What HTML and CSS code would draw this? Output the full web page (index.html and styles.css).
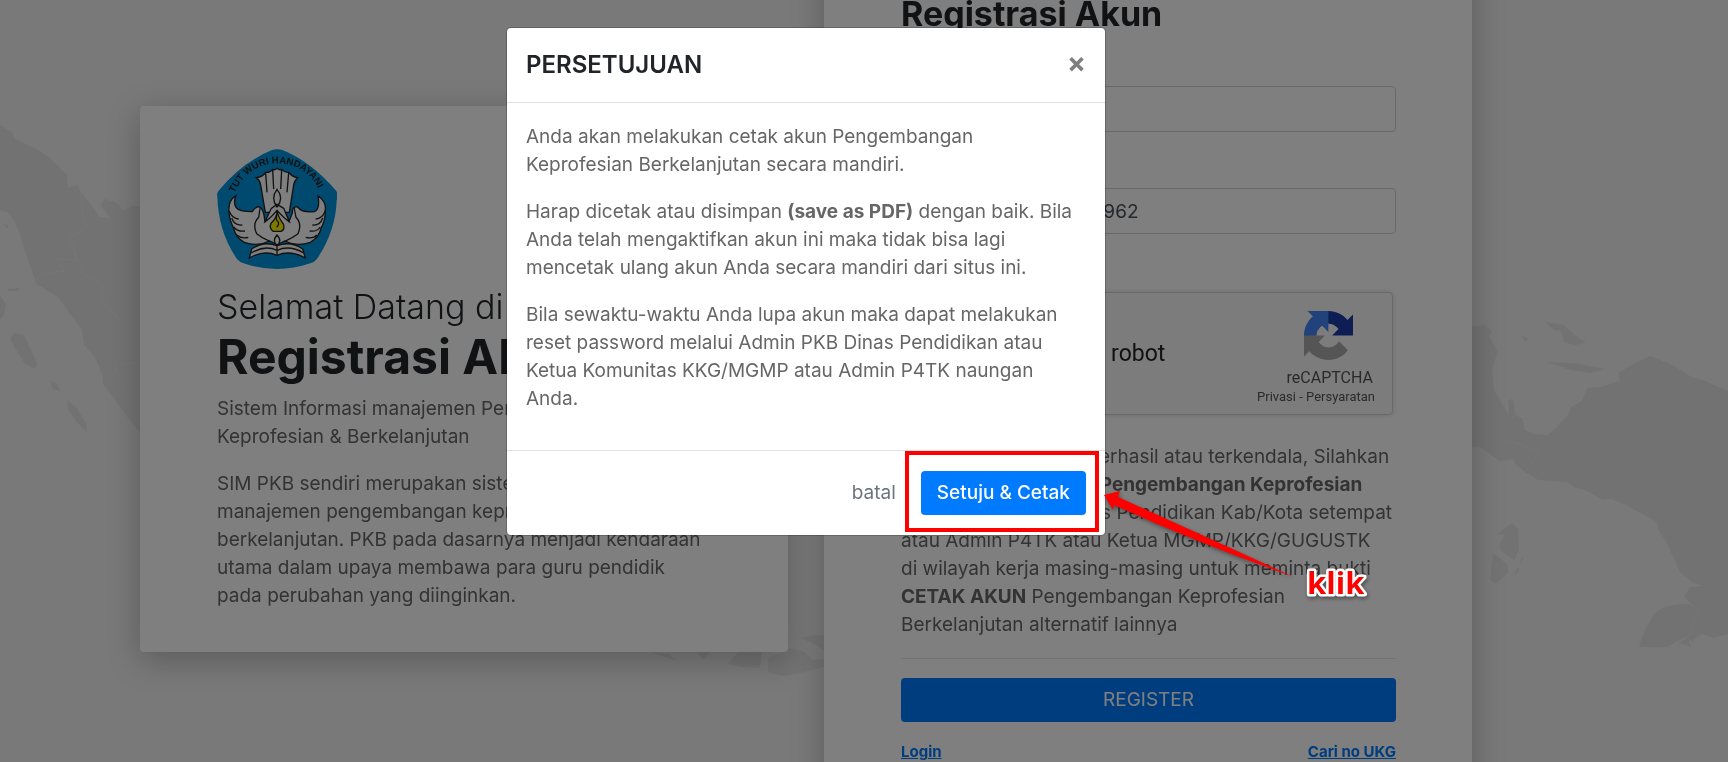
FILE: index.html
```html
<!DOCTYPE html>
<html lang="id">
<head>
  <meta charset="UTF-8">
  <meta name="viewport" content="width=device-width, initial-scale=1">
  <title>Registrasi Akun</title>
  <link rel="stylesheet" href="styles.css">
</head>
<body>

  <!-- Background map -->
  <svg class="map" viewBox="0 0 1728 762" preserveAspectRatio="xMidYMid slice" aria-hidden="true">
    <path d="M0 125L12 132L15 139L35 148L50 158L60 168L67 175L68 188L77 185L82 194L92 205L99 217L110 218L101 205L104 199L115 202L124 210L132 206L140 206V432L128 418L115 400L103 384L102 374L95 357L84 345L82 330L68 311L58 297L43 288L36 284L33 274L26 254L20 235L14 220L7 212L0 210Z"/>
    <path d="M10 338L14 333L24 335L31 350L37 363L35 369L25 364L15 348ZM50 380L57 384L61 392L52 388ZM67 400L77 408L87 425L86 432L76 421L69 411ZM7 289L20 288L18 291L9 291ZM0 295L6 304L4 315L0 320ZM3 224L8 225L8 229Z"/>
    <path d="M1472 326L1485 325L1492 331L1489 336L1498 352L1494 362L1492 372L1494 390L1500 400L1509 415L1508 400L1513 399L1515 415L1522 418L1525 430L1534 434L1548 435L1557 427L1568 415L1571 407L1582 401L1587 388L1600 387L1620 381L1618 373L1633 364L1650 356L1666 362L1683 371L1690 376L1705 381L1728 391V634L1713 638L1702 634L1692 641L1682 636L1692 627L1698 611L1684 597L1690 587L1703 586L1692 582L1680 572L1672 555L1666 541L1658 530L1657 522L1644 515L1626 505L1611 499L1603 500L1587 491L1574 487L1567 482L1538 480L1525 472L1515 464L1514 459L1500 461L1487 452L1479 446L1472 447Z"/>
    <path d="M1545 322L1564 325L1577 337L1586 342L1576 345L1565 343L1560 330L1555 331ZM1547 362L1575 363L1605 369L1591 373L1570 370ZM1522 335L1528 339L1525 342ZM1512 523L1518 529L1519 550L1514 560L1502 552L1499 546L1504 535L1497 534ZM1493 553L1507 564L1508 573L1496 584L1490 580ZM1521 558L1524 556L1520 566ZM1514 576L1518 566L1519 571ZM1639 647Q1644 628 1656 612Q1668 603 1689 604L1698 611L1691 634L1680 640L1667 647ZM1678 643L1688 637L1691 647Z"/>
    <path d="M650 652L668 654L677 661ZM696 652L710 652L704 660ZM738 652H762L760 668L742 667L728 664ZM768 658L790 648L805 652L812 660L824 659V667L800 673L783 676L768 672ZM800 638L815 635L824 635V650L810 642Z"/>
    <path class="map-border" d="M80 190L82 210L87 227L70 237L77 260L56 259L64 271L40 274L35 283M77 260L84 275L103 285L102 301L120 320L138 335M112 398L129 390L140 400M124 388L115 366L138 362M1515 415L1497 436L1540 452L1525 472M1698 611L1691 634L1678 645"/>
  </svg>

  <main class="stage">
    <section class="card intro">
      <svg class="logo" viewBox="0 0 360 360" role="img" aria-label="Tut Wuri Handayani">
        <path fill="#0094de" d="M163 4Q180-3 198 4Q282 38 358 126Q364 137 359 155Q356 245 300 330Q292 340 280 343Q180 377 80 343Q68 340 60 330Q4 250 1 142Q-2 135 5 125Q75 40 163 4Z"/>
        <path id="motto" fill="none" d="M52 132Q94 43 182 43Q272 44 313 136"/>
        <text class="motto"><textPath href="#motto">TUT WURI HANDAYANI</textPath></text>
        <g class="emblem">
          <path d="M145 190L131 108Q128 93 118 86Q138 83 146 70Q158 72 167 61Q174 65 180 58Q188 65 194 61Q204 72 216 70Q224 83 242 86Q233 93 230 108L217 190Z"/>
          <path fill="none" d="M146 72L150 130M167 63L170 120M194 63L191 120M215 72L210 130"/>
          <path d="M57 140Q32 155 36 190Q37 212 50 238Q56 266 82 280Q120 294 158 276Q174 282 180 290Q187 282 203 276Q240 294 280 280Q306 265 312 238Q326 212 325 182Q328 158 303 140Q310 182 292 188Q255 192 242 174Q225 170 226 192L216 218L180 184L144 218Q140 174 124 173Q111 177 106 188Q65 188 57 175Q48 160 57 140Z"/>
          <path fill="none" d="M36 185Q46 209 65 210M44 207Q52 230 76 228M50 234Q62 249 84 246M60 258Q73 270 94 265M325 185Q316 209 296 210M317 207Q310 230 286 228M310 234Q300 249 278 246M300 258Q290 270 266 265"/>
          <path fill="none" d="M130 174Q127 190 125 205Q105 225 119 254Q135 267 160 278M231 174Q234 190 237 205Q256 225 243 254Q226 267 202 278"/>
          <path d="M180 121Q160 148 180 174Q202 148 180 121ZM180 166L163 178L144 218Q160 208 180 184Q202 208 217 218L200 178Z"/>
          <path class="flame" d="M180 183Q181 206 162 223Q156 238 168 247H193Q205 240 199 225Q183 205 180 183Z"/>
          <path fill="none" d="M180 198Q174 210 183 218Q188 226 179 235"/>
          <path d="M180 258Q164 276 180 289Q197 276 180 258ZM104 300Q140 275 180 290Q221 275 257 300L265 327Q220 302 180 319Q140 302 97 327Z"/>
          <path fill="none" d="M103 312Q143 287 180 304Q218 287 260 312M180 290V319"/>
        </g>
      </svg>
      <h1 class="welcome">Selamat Datang di <strong>Registrasi Akun</strong></h1>
      <p>Sistem Informasi manajemen Pengembangan Keprofesian &amp; Berkelanjutan</p>
      <p>SIM PKB sendiri merupakan sistem informasi manajemen pengembangan keprofesian guru berkelanjutan. PKB pada dasarnya menjadi kendaraan utama dalam upaya membawa para guru pendidik pada perubahan yang diinginkan.</p>
    </section>

    <form class="card register">
      <h2>Registrasi Akun</h2>
      <div class="form-group">
        <label for="ukg">No UKG</label>
        <input type="text" id="ukg">
      </div>
      <div class="form-group">
        <label for="birth">Tanggal Lahir</label>
        <input type="text" id="birth" value="Contoh: 18 Agustus 1962">
      </div>
      <div class="captcha">
        <input type="checkbox" id="robot">
        <label for="robot">Saya bukan robot</label>
        <div class="captcha-brand">
          <svg class="captcha-logo" viewBox="0 0 64 64" aria-hidden="true">
            <path fill="#1c3aa9" d="M64 31.955l-.033-1.37V4.687l-7.16 7.16C50.948 4.674 42.033.093 32.05.093c-10.4 0-19.622 4.96-25.458 12.64l11.736 11.86a15.55 15.55 0 0 1 4.754-5.334c2.05-1.6 4.952-2.906 8.968-2.906.485 0 .86.057 1.135.163 4.976.393 9.288 3.14 11.828 7.124l-8.307 8.307L64 31.953"/>
            <path fill="#4285f4" d="M31.862.094l-1.37.033H4.594l7.16 7.16C4.58 13.147 0 22.06 0 32.046c0 10.4 4.96 19.622 12.64 25.458L24.5 45.768a15.55 15.55 0 0 1-5.334-4.754c-1.6-2.05-2.906-4.952-2.906-8.968 0-.485.057-.86.163-1.135.393-4.976 3.14-9.288 7.124-11.828l8.307 8.307L31.86.095"/>
            <path fill="#ababab" d="M.001 32.045l.033 1.37v25.898l7.16-7.16c5.86 7.173 14.774 11.754 24.76 11.754 10.4 0 19.622-4.96 25.458-12.64l-11.736-11.86a15.55 15.55 0 0 1-4.754 5.334c-2.05 1.6-4.952 2.906-8.968 2.906-.485 0-.86-.057-1.135-.163-4.976-.393-9.288-3.14-11.828-7.124l8.307-8.307c-10.522.04-22.4.066-27.295-.005"/>
          </svg>
          <span class="captcha-name">reCAPTCHA</span>
          <small>Privasi - Persyaratan</small>
        </div>
      </div>
      <p>Bila registrasi belum berhasil atau terkendala, Silahkan<br>
        hubungi <b>Admin P4TK Pengembangan Keprofesian</b><br>
        Berkelanjutan, ke Dinas Pendidikan Kab/Kota setempat<br>
        atau Admin P4TK atau Ketua MGMP/KKG/GUGUSTK<br>
        di wilayah kerja masing-masing untuk meminta bukti<br>
        <b>CETAK AKUN</b> Pengembangan Keprofesian<br>
        Berkelanjutan alternatif lainnya</p>
      <hr>
      <button type="submit" class="btn btn-register">REGISTER</button>
      <div class="links">
        <a href="#login">Login</a>
        <a href="#ukg">Cari no UKG</a>
      </div>
    </form>
  </main>

  <!-- Consent modal -->
  <div class="backdrop">
    <div class="modal" role="dialog" aria-labelledby="modal-title">
      <div class="modal-header">
        <h3 id="modal-title">PERSETUJUAN</h3>
        <button type="button" class="close" aria-label="Tutup">&times;</button>
      </div>
      <div class="modal-body">
        <p>Anda akan melakukan cetak akun Pengembangan Keprofesian Berkelanjutan secara mandiri.</p>
        <p>Harap dicetak atau disimpan <b>(save as PDF)</b> dengan baik. Bila Anda telah mengaktifkan akun ini maka tidak bisa lagi mencetak ulang akun Anda secara mandiri dari situs ini.</p>
        <p>Bila sewaktu-waktu Anda lupa akun maka dapat melakukan reset password melalui Admin PKB Dinas Pendidikan atau Ketua Komunitas KKG/MGMP atau Admin P4TK naungan Anda.</p>
      </div>
      <div class="modal-footer">
        <button type="button" class="btn btn-cancel">batal</button>
        <button type="button" class="btn btn-agree">Setuju &amp; Cetak</button>
      </div>
      <!-- Click hint over the agree button -->
      <svg class="hint" viewBox="0 0 480 160" aria-hidden="true">
        <rect x="7" y="7" width="190" height="77"/>
        <g class="hint-shadow">
          <path d="M204 49L220 45L218 51Q300 88 394 131Q300 98 214 59L213 64Z"/>
          <text x="407" y="148">klik</text>
        </g>
      </svg>
    </div>
  </div>

</body>
</html>
```
FILE: styles.css
```css
* {
  box-sizing: border-box;
}
body {
  margin: 0;
  overflow: hidden;
  background: #f2f2f2;
  color: #666;
  font-family: Inter, "Liberation Sans", sans-serif;
  font-size: 19px;
  line-height: 28px;
}
h1, h2, h3 {
  margin: 0;
  color: #212529;
}
p {
  margin: 0 0 19px;
}
button, input {
  font: inherit;
}

.map {
  position: fixed;
  width: 100%;
  height: 100%;
  fill: #e5e5e5;
}
.map-border {
  fill: none;
  stroke: #ebebeb;
}

/* Page */
.stage {
  position: relative;
  display: grid;
  grid-template-columns: 1fr 1fr;
  align-items: center;
  align-content: center;
  gap: 36px;
  height: 100vh;
  padding: 0 256px 4px 140px;
}
.card {
  padding: 43px 76px 42px 77px;
  background: #fff;
  border-radius: 4px;
  box-shadow: 0 8px 32px rgba(0, 0, 0, 0.25);
}
.card p {
  color: #666;
}
.intro {
  padding-right: 84px;
}
.intro p:last-child {
  margin-bottom: 0;
}
.logo {
  display: block;
  width: 120px;
  height: 120px;
  margin-bottom: 17px;
}
.motto {
  fill: #222;
  font: bold 29px "Liberation Sans", sans-serif;
}
.emblem {
  fill: #fff;
  stroke: #222;
  stroke-width: 4;
}
.emblem .flame {
  fill: #fff200;
}
.welcome {
  margin-bottom: 9px;
  font-size: 34px;
  font-weight: 300;
  line-height: 42px;
}
.welcome strong {
  display: block;
  font-size: 48px;
  font-weight: 700;
  line-height: 58px;
}

/* Registration form */
.register h2 {
  margin-bottom: 20px;
  font-size: 34px;
  line-height: 38px;
}
.form-group {
  margin-bottom: 23px;
}
.form-group label {
  display: block;
  margin-bottom: 5px;
}
.form-group input {
  display: block;
  width: 100%;
  height: 46px;
  padding: 0 14px;
  border: 1px solid #ced4da;
  border-radius: 4px;
  color: #495057;
}
.captcha {
  display: flex;
  align-items: center;
  gap: 26px;
  height: 123px;
  margin: 58px 3px 28px 0;
  padding: 0 17px 0 20px;
  background: #f9f9f9;
  border: 1px solid #d3d3d3;
  border-radius: 4px;
  box-shadow: 0 0 5px rgba(0, 0, 0, 0.15);
  color: #222;
  font-family: Roboto, sans-serif;
  font-size: 23px;
}
.captcha input {
  width: 40px;
  height: 40px;
  margin: 0;
}
.captcha-brand {
  display: flex;
  flex-direction: column;
  margin-left: auto;
  padding-top: 10px;
  color: #555;
  font-size: 16px;
  line-height: 20px;
}
.captcha-logo {
  width: 49px;
  height: 49px;
  margin: 0 22px 8px auto;
}
.captcha-name {
  margin-right: 2px;
  text-align: right;
}
.captcha small {
  font-size: 13px;
  line-height: 18px;
}
hr {
  height: 1px;
  margin: 0 0 19px;
  border: 0;
  background: #e5e5e5;
}
.btn {
  height: 44px;
  padding: 0 16px;
  border: 0;
  border-radius: 4px;
  color: #fff;
  cursor: pointer;
}
.btn-register {
  width: 100%;
  margin-bottom: 18px;
  background: #007bff;
}
.links {
  display: flex;
  justify-content: space-between;
  line-height: 24px;
}
.links a {
  color: #007bff;
  font-size: 15px;
  font-weight: 700;
}

/* Modal */
.backdrop {
  position: fixed;
  inset: 0;
  padding: 27px 116px 0 0;
  background: rgba(0, 0, 0, 0.5);
}
.modal {
  position: relative;
  max-width: 600px;
  margin: 0 auto;
  background: #fff;
  background-clip: padding-box;
  border: 1px solid rgba(0, 0, 0, 0.2);
  border-radius: 5px;
}
.modal-header {
  display: flex;
  align-items: center;
  justify-content: space-between;
  height: 75px;
  padding: 0 19px;
  border-bottom: 1px solid #dee2e6;
}
.modal-header h3 {
  font-size: 24px;
  font-weight: 600;
}
.close {
  padding: 0 0 4px;
  background: none;
  border: 0;
  color: #7f7f7f;
  font-size: 28px;
  font-weight: 700;
  cursor: pointer;
}
.modal-body {
  padding: 20px 28px 18px 19px;
}
.modal-footer {
  display: flex;
  align-items: center;
  justify-content: flex-end;
  gap: 9px;
  height: 85px;
  padding: 0 19px;
  border-top: 1px solid #dee2e6;
}
.btn-cancel {
  background: none;
  color: #6c757d;
}
.btn-agree {
  background: #007bff;
  font-weight: 500;
}
.hint {
  position: absolute;
  left: 393px;
  bottom: -71px;
  width: 480px;
  height: 160px;
  overflow: visible;
  pointer-events: none;
}
.hint-shadow {
  filter: drop-shadow(1px 2px 2px rgba(0, 0, 0, 0.4));
}
.hint rect {
  fill: none;
  stroke: #f00;
  stroke-width: 4;
}
.hint path {
  fill: #f00;
}
.hint text {
  fill: #f00;
  stroke: #fff;
  stroke-width: 5;
  stroke-linejoin: round;
  paint-order: stroke;
  font: bold 31px "Open Sans", sans-serif;
}
```
